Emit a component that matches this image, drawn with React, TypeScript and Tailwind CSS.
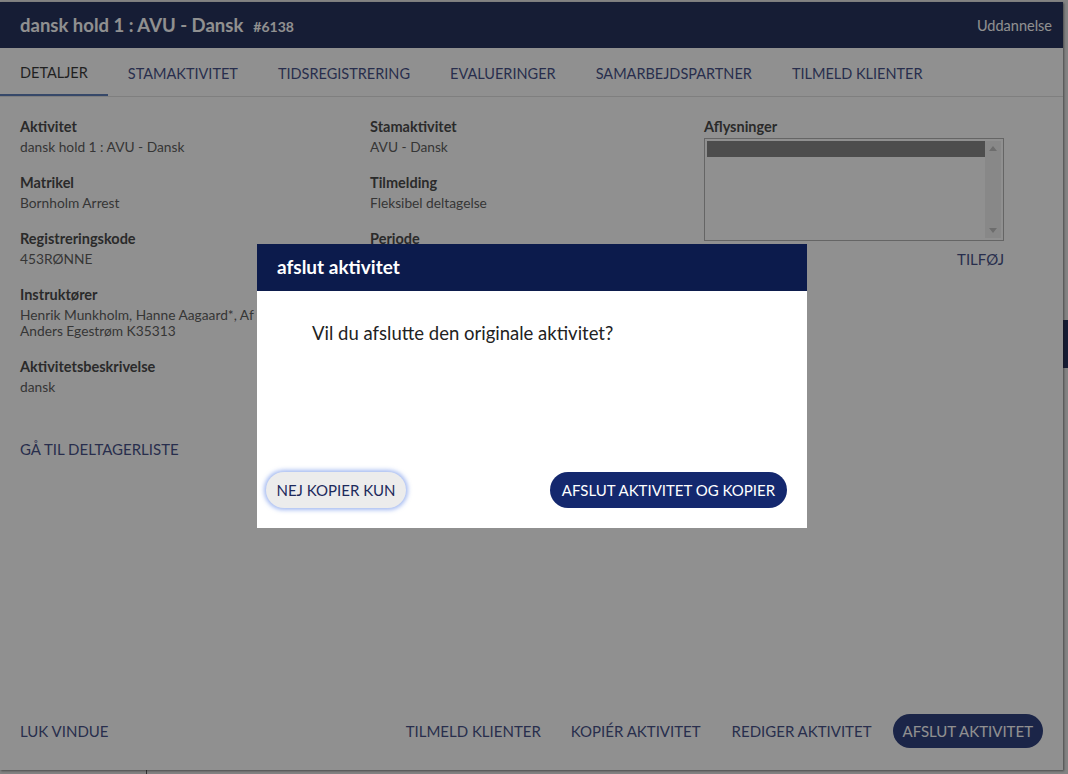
const tabs = [
  "Detaljer",
  "Stamaktivitet",
  "Tidsregistrering",
  "Evalueringer",
  "Samarbejdspartner",
  "Tilmeld klienter",
];

function Field({ label, children }: { label: string; children?: React.ReactNode }) {
  return (
    <div className="mb-[18px]">
      <div className="text-[14.5px] font-bold leading-5 text-[#333]">{label}</div>
      <div className="mt-[2px] min-h-4 text-[13.75px] leading-4 text-[#4a4a4a]">{children}</div>
    </div>
  );
}

export default function App() {
  return (
    <div className="relative h-[774px] w-[1068px] overflow-hidden bg-[#e4e4e4] font-['Lato',sans-serif]">
      {/* page behind the window */}
      <div className="absolute right-0 top-[320px] h-[48px] w-[5px] bg-[#0a1848]"></div>
      <div className="absolute bottom-0 left-[146px] h-[4px] w-px bg-[#444]"></div>

      <div className="relative mt-[2px] flex h-[768px] w-[1063px] flex-col bg-white shadow-[1px_1px_2px_rgba(0,0,0,0.5)]">
        <div className="flex h-[46px] items-center justify-between bg-[#0a1848] pl-5 pr-[11px] pt-[2px] text-white">
          <div className="flex items-baseline gap-[10px]">
            <span className="text-[18.5px] font-bold">dansk hold 1 : AVU - Dansk</span>
            <span className="text-[14px] font-bold">#6138</span>
          </div>
          <span className="text-[14.5px]">Uddannelse</span>
        </div>

        <div className="flex h-[49px] border-b border-[#dcdcdc]">
          {tabs.map((t, i) => (
            <div
              key={t}
              className={
                i === 0
                  ? "flex items-center border-b-2 border-[#4a6fb0] px-5 pt-[4px] text-[14.5px] uppercase text-[#1e1e1e]"
                  : "flex items-center px-5 pt-[4px] text-[14.5px] uppercase text-[#2e3a78]"
              }
            >
              {t}
            </div>
          ))}
        </div>

        <div className="flex flex-1 pl-5 pt-[20px]">
          <div className="w-[350px]">
            <Field label="Aktivitet">dansk hold 1 : AVU - Dansk</Field>
            <Field label="Matrikel">Bornholm Arrest</Field>
            <Field label="Registreringskode">453RØNNE</Field>
            <Field label="Instruktører">
              Henrik Munkholm, Hanne Aagaard*, Af
              <br />
              Anders Egestrøm K35313
            </Field>
            <Field label="Aktivitetsbeskrivelse">dansk</Field>
            <div className="mt-[43px] text-[15px] uppercase text-[#2e3a78]">Gå til deltagerliste</div>
          </div>
          <div className="w-[334px]">
            <Field label="Stamaktivitet">AVU - Dansk</Field>
            <Field label="Tilmelding">Fleksibel deltagelse</Field>
            <Field label="Periode" />
          </div>
          <div className="w-[300px]">
            <div className="text-[14.5px] font-bold leading-5 text-[#333]">Aflysninger</div>
            <div className="mt-[1px] flex h-[103px] border border-[#a8a8a8] p-[2px]">
              <div className="flex-1">
                <div className="h-[16px] bg-[#787878]"></div>
              </div>
              <div className="flex w-[16px] flex-col items-center justify-between bg-[#efefef] py-[5px]">
                <svg width="8" height="5" viewBox="0 0 8 5">
                  <path d="M0 5 L4 0 L8 5 Z" fill="#b8b8b8" />
                </svg>
                <svg width="8" height="5" viewBox="0 0 8 5">
                  <path d="M0 0 L4 5 L8 0 Z" fill="#b8b8b8" />
                </svg>
              </div>
            </div>
            <div className="mt-[7px] text-right text-[15px] uppercase text-[#2e3a78]">Tilføj</div>
          </div>
        </div>

        <div className="mb-[10px] flex h-[58px] items-center px-5 text-[15px] uppercase text-[#2e3a78]">
          <span>Luk vindue</span>
          <span className="ml-auto">Tilmeld klienter</span>
          <span className="ml-[30px]">Kopiér aktivitet</span>
          <span className="ml-[31px]">Rediger aktivitet</span>
          <span className="ml-[21px] flex h-[34px] items-center rounded-full bg-[#14286e] px-[10px] text-white">
            Afslut aktivitet
          </span>
        </div>
      </div>

      {/* modal backdrop */}
      <div className="absolute inset-0 bg-[#222]/50"></div>

      <div className="absolute left-[257px] top-[244px] flex h-[284px] w-[550px] flex-col bg-white">
        <div className="flex h-[47px] items-center bg-[#0c1b4c] px-5 text-[19px] font-bold text-white">
          afslut aktivitet
        </div>
        <div className="flex-1 pl-[55px] pt-[31px] text-[18.5px] leading-[22px] text-[#222]">
          Vil du afslutte den originale aktivitet?
        </div>
        <div className="mb-[20px] flex items-center justify-between pl-[9px] pr-5 text-[15px] uppercase">
          <span className="flex h-[36px] w-[140px] items-center justify-center rounded-full bg-[#ececec] text-[#1d2a5c] shadow-[0_0_4px_2px_rgba(90,130,230,0.55)]">
            Nej kopier kun
          </span>
          <span className="flex h-[36px] w-[237px] items-center justify-center rounded-full bg-[#14286e] text-white">
            Afslut aktivitet og kopier
          </span>
        </div>
      </div>
    </div>
  );
}
